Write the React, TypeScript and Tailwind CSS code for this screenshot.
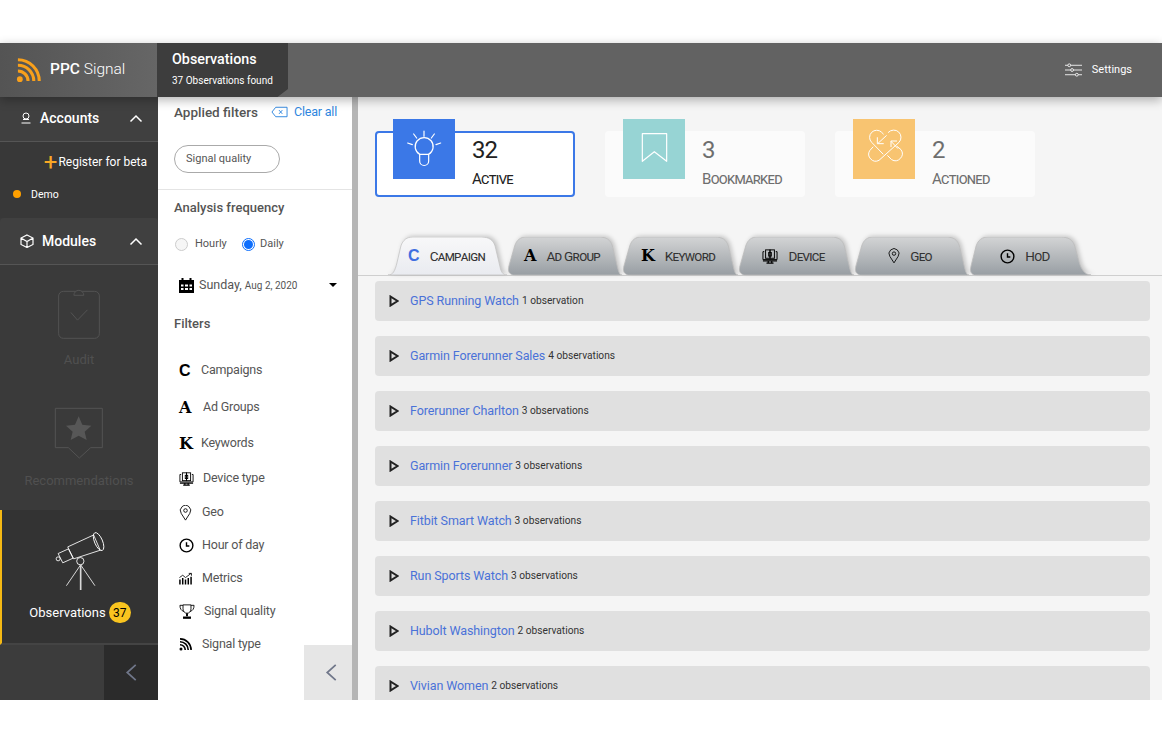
import React from 'react'

const font = "[font-family:Roboto,sans-serif]"

const RssIcon = ({ className }: { className: string }) => (
  <svg viewBox="0 0 26 26" className={className} fill="none" stroke="currentColor">
    <circle cx="4" cy="22" r="3" fill="currentColor" stroke="none" />
    <path d="M2 13.500a10.500 10.500 0 0 1 10.500 10.500" strokeWidth="3.200" />
    <path d="M2 7.500a16.500 16.500 0 0 1 16.500 16.500" strokeWidth="3.200" />
    <path d="M2 1.800a22.200 22.200 0 0 1 22.200 22.200" strokeWidth="3.200" />
  </svg>
)

const Chevron = ({ className }: { className: string }) => (
  <svg viewBox="0 0 14 9" className={className} fill="none" stroke="currentColor" strokeWidth="1.500">
    <path d="M1.500 7.500 7 2l5.500 5.500" />
  </svg>
)

const CollapseArrow = () => (
  <svg viewBox="0 0 12 18" className="h-[17px] w-[12px] text-[#70778a]" fill="none" stroke="currentColor" strokeWidth="1.800">
    <path d="M11 1 2 9l9 8" />
  </svg>
)

const ClockIcon = ({ className }: { className: string }) => (
  <svg viewBox="0 0 16 16" className={className} fill="none" stroke="currentColor" strokeWidth="1.500">
    <circle cx="8" cy="8" r="6.800" />
    <path d="M8 4.500V8.500H11" />
  </svg>
)

const PinIcon = ({ className }: { className: string }) => (
  <svg viewBox="0 0 14 18" className={className} fill="none" stroke="currentColor" strokeWidth="1">
    <path d="M7 17 2.200 9.500A5.800 5.800 0 1 1 11.800 9.500Z" />
    <circle cx="7" cy="6.200" r="2" />
  </svg>
)

const DeviceIcon = ({ className }: { className: string }) => (
  <svg viewBox="0 0 18 17" className={className} fill="none" stroke="currentColor" strokeWidth="1.100">
    <path d="M2.500 3H1v9h16V3h-1.500" />
    <rect x="4" y="1" width="5" height="9.500" />
    <rect x="9" y="1" width="5" height="9.500" />
    <rect x="7.500" y="4" width="3" height="4" />
    <path d="M1 13.500h16M7 13v2.500M11 13v2.500M5 16h8" strokeWidth="1.400" />
  </svg>
)

const TrophyIcon = () => (
  <svg viewBox="0 0 18 17" className="h-[15px] w-[16px] text-black" fill="none" stroke="currentColor">
    <path d="M4.500 1h9v4.500c0 3-2 5-4.500 5s-4.500-2-4.500-5Z" />
    <path d="M4.500 1.500H1c0 4 1.500 6 4.500 7M13.500 1.500H17c0 4-1.500 6-4.500 7" />
    <path d="M9 10.500V14" strokeWidth="2.200" />
    <path d="M4.500 15.500h9" strokeWidth="2.600" />
  </svg>
)

const MetricsIcon = () => (
  <svg viewBox="0 0 14 13" className="h-[13px] w-[13px] text-black" fill="none" stroke="currentColor">
    <path d="M1 13V7.500M4 13V6M7 13V7.500M10 13V6M13 13V4.500" strokeWidth="1.600" />
    <path d="M0.500 5.500 4 3 7 5.500 13 1M10.500 1H13.500V3.500" strokeWidth="0.900" />
  </svg>
)

const CalendarIcon = () => (
  <svg viewBox="0 0 15 15" className="h-[15px] w-[15px] text-black" fill="currentColor">
    <path d="M0 2h2.500V0h2v2h6V0h2v2H15v13H0Z" />
    <path d="M2 6.500h2.500v2H2Zm4 0h3v2H6Zm4.500 0H13v2h-2.500ZM2 10h2.500v2H2Zm4 0h3v2H6Zm4.500 0H13v2h-2.500Z" fill="#fff" />
  </svg>
)

const TelescopeIcon = () => (
  <svg viewBox="160 85 165 190" className="h-[63px] w-[55px]" fill="none" stroke="#fff" strokeWidth="2.600">
    <path d="M204 136 282 100 302 146 222 172Z" />
    <ellipse cx="297" cy="120" rx="12" ry="29" transform="rotate(-23 297 120)" />
    <path d="M175 156 206 142 220 170 189 184Z" />
    <circle cx="175" cy="172" r="6" />
    <circle cx="242" cy="179" r="11" />
    <path d="M243 190 200 253M243 190 286 253" stroke="#d8d8d8" strokeWidth="3" />
    <path d="M243 190V266" stroke="#d8d8d8" strokeWidth="5" />
  </svg>
)

const ClipboardIcon = () => (
  <svg viewBox="170 75 133 163" className="h-[54px] w-[44px]" fill="none" stroke="#535353" strokeWidth="3">
    <rect x="175" y="91" width="123" height="142" rx="14" />
    <path d="M221 103a15 15 0 0 1 30 0Z" fill="#3a3a3a" />
    <path d="M212 155 232 178 262 147" />
  </svg>
)

const RecommendIcon = () => (
  <svg viewBox="162 444 150 156" className="h-[52px] w-[50px]" fill="none" stroke="#535353" strokeWidth="3">
    <path d="M166 448H307V566H272L238 597 205 566H166Z" />
    <path d="M236 472 247 497 274 500 254 518 260 543 236 530 212 543 218 518 198 500 225 497Z" fill="#575757" stroke="none" />
  </svg>
)

const BulbIcon = () => (
  <svg viewBox="0 0 186 180" className="h-[60px] w-[62px]" fill="none" stroke="#fff" strokeWidth="3.600" strokeLinecap="round">
    <path d="M80 106a27 27 0 1 1 27 0" />
    <path d="M80 106v20a13.500 13.500 0 0 0 27 0v-20Z" />
    <path d="M93 36V52M62 45 71 57M124 45 115 57M44 72 58 77M143 72 129 77" />
  </svg>
)

const BookmarkIcon = () => (
  <svg viewBox="0 0 186 180" className="h-[60px] w-[62px]" fill="none" stroke="#fff" strokeWidth="3.600" strokeLinejoin="round">
    <path d="M58 44H131V127L94 98 58 127Z" />
  </svg>
)

const ActionedIcon = () => (
  <svg viewBox="0 0 186 180" className="h-[60px] w-[62px]" fill="none" stroke="#fff" strokeWidth="3" strokeLinecap="round" strokeLinejoin="round">
    <path d="M90 105 56 70A21 21 0 0 1 86 40L91 45" />
    <path d="M106 40A21 21 0 0 1 138 70L78 124A21 21 0 0 1 50 95L60 84" />
    <path d="M104 110 116 122A21 21 0 0 0 144 92L132 82" />
    <path d="M100 50 75 73M73 56V74H91" />
    <path d="M115 68 134 88M114 83V66H131" />
  </svg>
)

const TabShape = ({ active, last }: { active?: boolean; last?: boolean }) => (
  <svg viewBox="0 0 120 38" preserveAspectRatio="none" className="absolute inset-0 h-full w-full drop-shadow-[2px_-1px_2px_rgba(0,0,0,0.2)]">
    <defs>
      <linearGradient id={active ? 'tab-on' : 'tab-off'} x1="0" y1="0" x2="0" y2="1">
        <stop offset="0" stopColor={active ? '#f8f8f9' : '#d3d4d5'} />
        <stop offset="1" stopColor={active ? '#e9ebf0' : '#989ea3'} />
      </linearGradient>
    </defs>
    <path
      d={
        active
          ? 'M0 38C5 38 7 34 9 26L13 9C15 3 19 0 25 0H94C102 0 106 3 108 9L113 30C114 35 116 38 120 38Z'
          : last
            ? 'M5 38C1 36 1 33 2 29L7 9C9 3 13 0 19 0H90C98 0 102 3 104 9L108 24C110 32 114 38 120 38Z'
            : 'M6 38C1 36 1 33 2 29L8 9C10 3 14 0 20 0H96C104 0 108 3 110 9L115 29C116 33 117 38 120 38Z'
      }
      fill={`url(#${active ? 'tab-on' : 'tab-off'})`}
      stroke={active ? '#c4c4c4' : '#bcbcbc'}
      strokeWidth="0.800"
    />
  </svg>
)

const tabs = [
  { label: 'Campaign', w: 'w-[119px] pr-[2px]', icon: <span className="font-['Liberation_Sans',sans-serif] text-[16px] font-bold text-[#3f6fe0]">C</span>, active: true },
  { label: 'Ad Group', w: 'w-[115px] pr-[5px]', icon: <span className="font-['DejaVu_Serif',serif] text-[16px] font-bold text-black">A</span> },
  { label: 'Keyword', w: 'w-[116px] pr-[4px]', icon: <span className="font-['DejaVu_Serif',serif] text-[16px] font-bold text-black">K</span> },
  { label: 'Device', w: 'w-[116px] pr-[5px]', icon: <DeviceIcon className="h-[15px] w-[16px] text-black" /> },
  { label: 'Geo', w: 'w-[115px] pr-[3px]', icon: <PinIcon className="h-[16px] w-[12px] text-black" /> },
  { label: 'HoD', w: 'w-[122px] pr-[10px]', icon: <ClockIcon className="h-[15px] w-[15px] text-black" />, last: true },
]

const rows = [
  ['GPS Running Watch', '1 observation'],
  ['Garmin Forerunner Sales', '4 observations'],
  ['Forerunner Charlton', '3 observations'],
  ['Garmin Forerunner', '3 observations'],
  ['Fitbit Smart Watch', '3 observations'],
  ['Run Sports Watch', '3 observations'],
  ['Hubolt Washington', '2 observations'],
  ['Vivian Women', '2 observations'],
]

const filters = [
  { label: 'Campaigns', h: 'h-[37px]', gap: 'w-[22px]', icon: <span className="font-['Liberation_Sans',sans-serif] text-[16px] font-bold leading-none text-black">C</span> },
  { label: 'Ad Groups', h: 'h-[37px]', gap: 'w-[24px]', icon: <span className="font-['DejaVu_Serif',serif] text-[16px] font-bold leading-none text-black">A</span> },
  { label: 'Keywords', h: 'h-[36px]', gap: 'w-[22px]', icon: <span className="font-['DejaVu_Serif',serif] text-[16px] font-bold leading-none text-black">K</span> },
  { label: 'Device type', h: 'h-[34px]', gap: 'w-[24px]', icon: <DeviceIcon className="h-[14px] w-[15px] text-black" /> },
  { label: 'Geo', h: 'h-[33px]', gap: 'w-[23px]', icon: <PinIcon className="h-[16px] w-[13px] text-black" /> },
  { label: 'Hour of day', h: 'h-[33px]', gap: 'w-[23px]', icon: <ClockIcon className="h-[15px] w-[15px] text-black" /> },
  { label: 'Metrics', h: 'h-[33px]', gap: 'w-[23px]', icon: <MetricsIcon /> },
  { label: 'Signal quality', h: 'h-[33px]', gap: 'w-[25px]', icon: <TrophyIcon /> },
  { label: 'Signal type', h: 'h-[33px]', gap: 'w-[23px]', icon: <RssIcon className="h-[13px] w-[13px] text-black" /> },
]

const stats = [
  { n: '32', label: 'Active', square: 'ml-[16px] -mt-[14px] bg-[#3b78e7]', icon: <BulbIcon />, on: true },
  { n: '3', label: 'Bookmarked', square: 'ml-[18px] -mt-[12px] bg-[#97d4d4]', icon: <BookmarkIcon /> },
  { n: '2', label: 'Actioned', square: 'ml-[18px] -mt-[12px] bg-[#f8c471]', icon: <ActionedIcon /> },
]

function Sidebar() {
  return (
    <aside className="flex w-[158px] shrink-0 flex-col bg-[#3a3a3a] text-white">
      <div className="flex h-[45px] items-center border-b border-[#555] bg-[#404040] pb-[2px] pl-[20px] pr-[15px]">
        <svg viewBox="0 0 12 12" className="h-[12px] w-[12px]" fill="none" stroke="currentColor">
          <circle cx="6" cy="4" r="3" />
          <path d="M1.500 11h9M3 7.500h6" />
        </svg>
        <span className="ml-[8px] flex-1 text-[14px] font-medium">Accounts</span>
        <Chevron className="h-[9px] w-[14px]" />
      </div>
      <div className="h-[76px] bg-[#383838]">
        <div className="flex h-[37px] items-center justify-end gap-[1px] pr-[11px] pt-[2px] text-[12px]">
          <span className="text-[24px] font-normal leading-none text-[#f9a825]">+</span>
          Register for beta
        </div>
        <div className="flex items-center pl-[13px] pt-[8px] text-[10.500px]">
          <span className="-mt-[2px] h-[8px] w-[8px] rounded-full bg-[#ffa000]" />
          <span className="ml-[10px]">Demo</span>
        </div>
      </div>
      <div className="flex h-[47px] items-center rounded-t border-b border-[#555] bg-[#404040] pl-[20px] pr-[15px]">
        <svg viewBox="0 0 14 14" className="h-[14px] w-[14px]" fill="none" stroke="currentColor" strokeWidth="1.200">
          <path d="M7 1 13 4V10.500L7 13.500 1 10.500V4ZM1 4 7 7.500 13 4M7 7.500V13.500" />
        </svg>
        <span className="ml-[8px] flex-1 text-[14px] font-medium">Modules</span>
        <Chevron className="h-[9px] w-[14px]" />
      </div>
      <div className="flex h-[122px] flex-col items-center pt-[21px] text-[13px] text-[#505050]">
        <ClipboardIcon />
        <span className="mt-[10px] leading-[20px]">Audit</span>
      </div>
      <div className="flex h-[123px] flex-col items-center pt-[20px] text-[13px] text-[#505050]">
        <RecommendIcon />
        <span className="mt-[12px] leading-[20px]">Recommendations</span>
      </div>
      <div className="flex h-[135px] flex-col items-center border-b-2 border-l-2 border-[#444] border-l-[#f5b914] bg-[#333] pt-[20px]">
        <TelescopeIcon />
        <div className="mt-[9px] flex items-center gap-[3px] text-[13px]">
          Observations
          <span className="flex h-[21px] w-[22px] items-center justify-center rounded-full bg-[#f9c41f] text-[12px] text-black">37</span>
        </div>
      </div>
      <div className="flex flex-1 justify-end bg-[#3c3c3c]">
        <button className="flex w-[54px] items-center justify-center bg-[#2b2b2b]">
          <CollapseArrow />
        </button>
      </div>
    </aside>
  )
}

function FilterPanel() {
  return (
    <section className="relative w-[200px] shrink-0 border-r-[6px] border-[#b5b5b5] bg-white text-[#555]">
      <div className="flex h-[30px] items-center justify-between pl-[16px] pr-[15px]">
        <span className="text-[13.500px] font-medium">Applied filters</span>
        <span className="flex items-center gap-[6px] text-[12.500px] tracking-[-0.2px] text-[#2e86de]">
          <svg viewBox="0 0 18 12" className="h-[12px] w-[17px]" fill="none" stroke="currentColor">
            <path d="M5 1H17V11H5L1 6Z" />
            <path d="M8.500 4 12 8M12 4 8.500 8" />
          </svg>
          Clear all
        </span>
      </div>
      <div className="h-[63px] border-b border-[#e4e4e4] pl-[16px] pt-[18px]">
        <div className="flex h-[28px] w-[106px] items-center rounded-full border border-[#aaa] pl-[11px] text-[11px]">Signal quality</div>
      </div>
      <div className="flex h-[35px] items-center pl-[16px] text-[13px] font-medium">Analysis frequency</div>
      <div className="flex h-[39px] items-center pl-[17px] text-[11px]">
        <span className="h-[13px] w-[13px] rounded-full border border-[#ccc] bg-[#f6f6f6]" />
        <span className="ml-[7px] w-[34px]">Hourly</span>
        <span className="ml-[13px] flex h-[13px] w-[13px] items-center justify-center rounded-full border border-[#0d6efd]">
          <span className="h-[9px] w-[9px] rounded-full bg-[#0d6efd]" />
        </span>
        <span className="ml-[5px]">Daily</span>
      </div>
      <div className="flex h-[42px] items-center pl-[21px] pr-[15px]">
        <CalendarIcon />
        <span className="ml-[5px] flex-1 text-[12.500px]">Sunday, <span className="text-[10px]">Aug 2, 2020</span></span>
        <span className="h-0 w-0 border-x-[4px] border-t-[4px] border-x-transparent border-t-black" />
      </div>
      <div className="flex h-[36px] items-center pl-[16px] text-[13px] font-medium">Filters</div>
      <div className="pt-[10px]">
        {filters.map((f) => (
          <div key={f.label} className={`flex items-center pl-[21px] text-[12.500px] tracking-[-0.2px] ${f.h}`}>
            <span className={`flex shrink-0 items-center ${f.gap}`}>{f.icon}</span>
            <span className="-mt-[1px]">{f.label}</span>
          </div>
        ))}
      </div>
      <button className="absolute bottom-0 right-0 flex h-[55px] w-[48px] items-center justify-center bg-[#e6e6e6] pl-[6px]">
        <CollapseArrow />
      </button>
    </section>
  )
}

function Main() {
  return (
    <main className="min-w-0 flex-1 overflow-hidden bg-[#f5f5f5]">
      <div className="flex gap-[30px] pl-[17px] pt-[34px]">
        {stats.map((s) => (
          <div
            key={s.label}
            className={`flex h-[66px] w-[200px] rounded ${s.on ? 'border-2 border-[#3b78e7] bg-white text-[#222]' : 'bg-[#fbfbfb] text-[#6e6e6e]'}`}
          >
            <div className={`h-[60px] w-[62px] shrink-0 ${s.square}`}>{s.icon}</div>
            <div className="ml-[17px] flex flex-col">
              <span className={`text-[24px] leading-[34px] tracking-[-1px] ${s.on ? '' : 'mt-[2px]'}`}>{s.n}</span>
              <span className="text-[15px] leading-[24px] tracking-[-0.7px] [font-variant:small-caps]">{s.label}</span>
            </div>
          </div>
        ))}
      </div>
      <div className="mt-[40px] flex border-b border-[#cfcfcf] pl-[30px]">
        {tabs.map((t) => (
          <div key={t.label} className={`relative flex h-[38px] items-center justify-center gap-[10px] ${t.w}`}>
            <TabShape active={t.active} last={t.last} />
            <span className="relative flex items-center">{t.icon}</span>
            <span className="relative text-[13.500px] tracking-[-0.7px] text-[#333] [font-variant:small-caps]">{t.label}</span>
          </div>
        ))}
      </div>
      <div className="flex flex-col gap-[15px] pl-[17px] pr-[12px] pt-[5px]">
        {rows.map(([name, count]) => (
          <div key={name} className="flex h-[40px] shrink-0 items-center rounded-sm bg-[#e0e0e0] pl-[14px]">
            <svg viewBox="0 0 10 12" className="h-[12px] w-[10px] text-[#222]" fill="none" stroke="currentColor" strokeWidth="2">
              <path d="M1.500 1.500 8.500 6 1.500 10.500Z" />
            </svg>
            <span className="ml-[11px] text-[12.500px] tracking-[-0.1px] text-[#4a72d8]">{name}</span>
            <span className="ml-[3px] text-[10.200px] text-[#333]">{count}</span>
          </div>
        ))}
      </div>
    </main>
  )
}

export default function App() {
  return (
    <div className={`h-[744px] w-[1162px] overflow-hidden bg-white py-[43px] ${font}`}>
      <div className="flex h-[657px] flex-col">
        <header className="relative z-10 flex h-[54px] shrink-0 bg-[#626262] text-white shadow-[0_3px_10px_rgba(0,0,0,0.3)]">
          <div className="flex w-[157px] items-center bg-gradient-to-r from-[#545454] to-[#666] pl-[16px]">
            <RssIcon className="h-[25px] w-[25px] text-[#f9a01b]" />
            <span className="ml-[9px] text-[15.500px]"><span className="font-medium">PPC</span> <span className="font-light">Signal</span></span>
          </div>
          <div className="flex h-[54px] w-[131px] flex-col bg-[#3d3d3d] pl-[15px] [clip-path:polygon(0_0,100%_0,100%_85%,92%_100%,0_100%)]">
            <span className="mt-[5px] text-[14.300px] font-medium leading-[22px]">Observations</span>
            <span className="text-[10px] leading-[22px]">37 Observations found</span>
          </div>
          <div className="ml-auto flex items-center gap-[10px] pr-[30px] text-[11px]">
            <svg viewBox="0 0 18 16" className="h-[16px] w-[17px]" fill="none" stroke="currentColor" strokeWidth="0.900">
              <path d="M0 3h3M6 3h12M0 8h6M9 8h9M0 13h11M14 13h4" />
              <circle cx="4.500" cy="3" r="1.500" />
              <circle cx="7.500" cy="8" r="1.500" />
              <circle cx="12.500" cy="13" r="1.500" />
            </svg>
            Settings
          </div>
        </header>
        <div className="flex min-h-0 flex-1">
          <Sidebar />
          <FilterPanel />
          <Main />
        </div>
      </div>
    </div>
  )
}
